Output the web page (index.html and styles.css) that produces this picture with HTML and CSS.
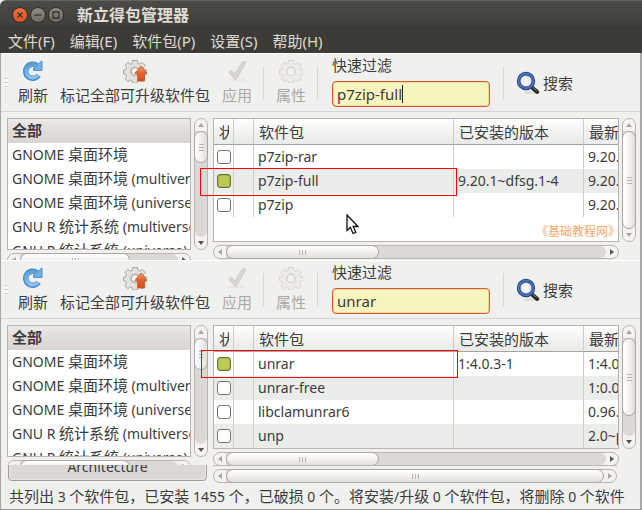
FILE: index.html
```html
<!DOCTYPE html>
<html lang="zh-CN">
<head>
<meta charset="utf-8">
<title>新立得包管理器</title>
<link rel="stylesheet" href="styles.css">
</head>
<body>
<svg class="defs" width="0" height="0" aria-hidden="true">
  <defs>
    <linearGradient id="blue" x1="0" y1="0" x2="0" y2="1"><stop offset="0" stop-color="#5c9fd4"/><stop offset="1" stop-color="#8cc0ee"/></linearGradient>
    <linearGradient id="orange" x1="0" y1="0" x2="0" y2="1"><stop offset="0" stop-color="#f3a36e"/><stop offset=".5" stop-color="#dd622d"/><stop offset="1" stop-color="#d5501c"/></linearGradient>
    <radialGradient id="glass"><stop offset="0" stop-color="#ffffff"/><stop offset="1" stop-color="#d5dbe3"/></radialGradient>
    <symbol id="refresh" viewBox="0 0 24 24">
      <path d="M17.5 16.2A7 7 0 1 1 15.8 6.6" fill="none" stroke="#4a8dc6" stroke-width="5.6"/>
      <path d="M12.6 11.4V8.9L14.8 7.6 17.6 4.8 21 2V11.4z" fill="#77b0e2" stroke="#4a8dc6"/>
      <path d="M17 15.7A6.4 6.4 0 1 1 16 7.4" fill="none" stroke="url(#blue)" stroke-width="3.8"/>
    </symbol>
    <symbol id="gear" viewBox="0 0 24 24">
      <path d="M9.6 1.5h4.8l.5 3 1.7.7 2.5-1.8 3 3-1.7 2.5.7 1.7 3 .5v3.8l-3 .6-.7 1.7 1.7 2.5-3 3-2.5-1.8-1.7.7-.5 2.4H9.6l-.5-2.4-1.7-.7-2.5 1.8-3-3 1.7-2.5-.7-1.7-2.4-.6v-3.8l2.4-.5.7-1.7-1.7-2.5 3-3 2.5 1.8 1.7-.7z" fill="#e4e2df" stroke="#aaa6a2"/>
      <circle cx="12" cy="12.4" r="5.6" fill="#d4d1ce"/><circle cx="12" cy="12.4" r="3.8" fill="#fafafa" stroke="#a29e9b"/>
    </symbol>
    <symbol id="gear-off" viewBox="0 0 24 24">
      <path d="M9.6 1.5h4.8l.5 3 1.7.7 2.5-1.8 3 3-1.7 2.5.7 1.7 3 .5v3.8l-3 .6-.7 1.7 1.7 2.5-3 3-2.5-1.8-1.7.7-.5 2.4H9.6l-.5-2.4-1.7-.7-2.5 1.8-3-3 1.7-2.5-.7-1.7-2.4-.6v-3.8l2.4-.5.7-1.7-1.7-2.5 3-3 2.5 1.8 1.7-.7z" fill="#eeecea" stroke="#d8d4d1"/>
      <circle cx="12" cy="12.4" r="4.2" fill="#f1f1ef" stroke="#d8d4d1" stroke-width="1.4"/>
    </symbol>
    <symbol id="upgrade" viewBox="0 0 24 24">
      <use href="#gear" width="24" height="24"/>
      <path d="M18 7l6.2 7.4h-2.6V22h-7v-7.6h-2.8z" fill="url(#orange)" stroke="#c9511f" stroke-width=".8"/>
    </symbol>
    <symbol id="apply" viewBox="0 0 24 24">
      <ellipse cx="12" cy="20.8" rx="10" ry="1.6" fill="#e9e8e6"/>
      <path d="M3.6 13l3.2-1.6 3 3.8L17.4 3l3.4-.4-1 3.2-9 15.2z" fill="#d8d5d2" stroke="#cfccc9"/>
    </symbol>
    <symbol id="search" viewBox="0 0 24 24">
      <ellipse cx="15" cy="21.5" rx="7" ry="1.6" fill="#dededc"/>
      <path d="M15 15.5l6.2 5.5" stroke="#292929" stroke-width="4" stroke-linecap="round"/>
      <path d="M16.5 16l4 3.4" stroke="#858585" stroke-width="1"/>
      <circle cx="10" cy="10" r="7.4" fill="url(#glass)" stroke="#23427e" stroke-width="3.6"/>
      <circle cx="10" cy="10" r="7.4" fill="none" stroke="#4c76bd" stroke-width="1.8"/>
    </symbol>
  </defs>
</svg>

<div class="window">
  <header class="titlebar">
    <button class="wm close" aria-label="关闭"><svg viewBox="0 0 16 16"><path d="M5.5 5.5l5 5M10.5 5.5l-5 5"/></svg></button>
    <button class="wm" aria-label="最小化"><svg viewBox="0 0 16 16"><path d="M4.5 8h7"/></svg></button>
    <button class="wm" aria-label="最大化"><svg viewBox="0 0 16 16"><path d="M5 5h6v6H5z"/></svg></button>
    <h1>新立得包管理器</h1>
  </header>
  <nav class="menubar">
    <button>文件(F)</button><button>编辑(E)</button><button>软件包(P)</button><button>设置(S)</button><button>帮助(H)</button>
  </nav>

  <section class="view first">
    <div class="toolbar">
      <span class="grip"></span>
      <button class="tool"><svg><use href="#refresh"/></svg>刷新</button>
      <button class="tool"><svg><use href="#upgrade"/></svg>标记全部可升级软件包</button>
      <button class="tool" disabled><svg><use href="#apply"/></svg>应用</button>
      <span class="sep"></span>
      <button class="tool" disabled><svg><use href="#gear-off"/></svg>属性</button>
      <span class="sep"></span>
      <div class="filter"><label for="filter1">快速过滤</label><span class="field"><input id="filter1" type="text" value="p7zip-full"><i class="caret"></i></span></div>
      <span class="sep"></span>
      <button class="find"><svg><use href="#search"/></svg>搜索</button>
    </div>
    <div class="panes">
      <div class="sidebar">
        <ul class="sections">
          <li class="current">全部</li>
          <li><span class="en">GNOME </span>桌面环境</li>
          <li><span class="en">GNOME </span>桌面环境<span class="en"> (multiverse)</span></li>
          <li><span class="en">GNOME </span>桌面环境<span class="en"> (universe)</span></li>
          <li><span class="en">GNU R </span>统计系统<span class="en"> (multiverse)</span></li>
          <li><span class="en">GNU R </span>统计系统<span class="en"> (universe)</span></li>
        </ul>
        <div class="vbar"><i class="arrow up dim"></i><div class="track"><div class="thumb short"></div></div><i class="arrow down"></i></div>
        <div class="hbar"><i class="arrow left dim"></i><div class="track"><div class="thumb side"></div></div><i class="arrow right"></i></div>
      </div>
      <div class="packages">
        <div class="frame">
          <table>
            <colgroup><col class="c-state"><col class="c-mark"><col class="c-name"><col class="c-ver"><col class="c-new"></colgroup>
            <thead><tr><th><div class="cut">状态</div></th><th></th><th>软件包</th><th>已安装的版本</th><th>最新版本</th></tr></thead>
            <tbody>
              <tr><td><input type="checkbox" aria-label="p7zip-rar"></td><td></td><td>p7zip-rar</td><td></td><td>9.20.1</td></tr>
              <tr><td><input type="checkbox" aria-label="p7zip-full" checked></td><td></td><td>p7zip-full</td><td>9.20.1~dfsg.1-4</td><td>9.20.1</td></tr>
              <tr><td><input type="checkbox" aria-label="p7zip"></td><td></td><td>p7zip</td><td></td><td>9.20.1</td></tr>
            </tbody>
          </table>
          <span class="credit">《基础教程网》</span>
        </div>
        <div class="vbar"><i class="arrow up dim"></i><div class="track"><div class="thumb full"></div></div><i class="arrow down dim"></i></div>
        <div class="hbar"><i class="arrow left dim"></i><div class="track"><div class="thumb main"></div></div><i class="arrow right"></i></div>
        <div class="outline second-row"></div>
        <svg class="pointer" viewBox="0 0 13 21"><path d="M1 1v15.5l3.4-3.2 2.6 6.2 2.8-1.2-2.6-5.8H12z" fill="#fff" stroke="#111" stroke-width="1.3"/></svg>
      </div>
    </div>
  </section>

  <section class="view second">
    <div class="toolbar">
      <span class="grip"></span>
      <button class="tool"><svg><use href="#refresh"/></svg>刷新</button>
      <button class="tool"><svg><use href="#upgrade"/></svg>标记全部可升级软件包</button>
      <button class="tool" disabled><svg><use href="#apply"/></svg>应用</button>
      <span class="sep"></span>
      <button class="tool" disabled><svg><use href="#gear-off"/></svg>属性</button>
      <span class="sep"></span>
      <div class="filter"><label for="filter2">快速过滤</label><span class="field"><input id="filter2" type="text" value="unrar"></span></div>
      <span class="sep"></span>
      <button class="find"><svg><use href="#search"/></svg>搜索</button>
    </div>
    <div class="panes">
      <div class="sidebar">
        <ul class="sections">
          <li class="current">全部</li>
          <li><span class="en">GNOME </span>桌面环境</li>
          <li><span class="en">GNOME </span>桌面环境<span class="en"> (multiverse)</span></li>
          <li><span class="en">GNOME </span>桌面环境<span class="en"> (universe)</span></li>
          <li><span class="en">GNU R </span>统计系统<span class="en"> (multiverse)</span></li>
          <li><span class="en">GNU R </span>统计系统<span class="en"> (universe)</span></li>
        </ul>
        <div class="vbar"><i class="arrow up dim"></i><div class="track"><div class="thumb short"></div></div><i class="arrow down"></i></div>
        <div class="hbar"><i class="arrow left dim"></i><div class="track"><div class="thumb side"></div></div><i class="arrow right"></i></div>
      </div>
      <div class="packages">
        <div class="frame">
          <table>
            <colgroup><col class="c-state"><col class="c-mark"><col class="c-name"><col class="c-ver"><col class="c-new"></colgroup>
            <thead><tr><th><div class="cut">状态</div></th><th></th><th>软件包</th><th>已安装的版本</th><th>最新版本</th></tr></thead>
            <tbody>
              <tr><td><input type="checkbox" aria-label="unrar" checked></td><td></td><td>unrar</td><td>1:4.0.3-1</td><td>1:4.0.3</td></tr>
              <tr><td><input type="checkbox" aria-label="unrar-free"></td><td></td><td>unrar-free</td><td></td><td>1:0.0.1</td></tr>
              <tr><td><input type="checkbox" aria-label="libclamunrar6"></td><td></td><td>libclamunrar6</td><td></td><td>0.96.4</td></tr>
              <tr><td><input type="checkbox" aria-label="unp"></td><td></td><td>unp</td><td></td><td>2.0~pre</td></tr>
            </tbody>
          </table>
        </div>
        <div class="vbar"><i class="arrow up dim"></i><div class="track"><div class="thumb most"></div></div><i class="arrow down"></i></div>
        <div class="hbar"><i class="arrow left dim"></i><div class="track"><div class="thumb main"></div></div><i class="arrow right"></i></div>
        <div class="outline first-row"></div>
      </div>
    </div>
  </section>

  <section class="tail">
    <button class="arch">Architecture</button>
    <div class="detail"><div class="hbar"><i class="arrow left dim"></i><div class="track"><div class="thumb full"></div></div><i class="arrow right dim"></i></div></div>
  </section>
  <footer class="status">共列出<span class="en"> 3 </span>个软件包，已安装<span class="en"> 1455 </span>个，已破损<span class="en"> 0 </span>个。将安装<span class="en">/</span>升级<span class="en"> 0 </span>个软件包，将删除<span class="en"> 0 </span>个软件</footer>
</div>
</body>
</html>
```

FILE: styles.css
```css
* { box-sizing: border-box; }

body {
  margin: 0;
  background: #3c3b37;
  color: #3c3c3c;
  font: 15px/24px "Noto Sans", "Noto Sans CJK SC", sans-serif;
  overflow: hidden;
}

button {
  margin: 0;
  padding: 0;
  border: 0;
  background: none;
  color: inherit;
  font: inherit;
}

.defs { position: absolute; }
.en { font-size: 14px; white-space: pre; }

.window {
  display: flex;
  flex-direction: column;
  min-height: 100vh;
  border-bottom: 1px solid #9c9894;
  background: #f0f1ef;
}

/* Title and menus */
.titlebar {
  display: flex;
  align-items: center;
  gap: 2px;
  height: 26px;
  padding: 2px 12px 0;
  border-top: 1px solid #67655f;
  border-radius: 6px 0 0 0;
  background: linear-gradient(#4b4a45, #403f3a);
}
.titlebar h1 {
  margin: 0 0 0 11px;
  color: #dfdbd2;
  font-size: 16px;
  line-height: 20px;
}
.wm {
  width: 16px;
  height: 16px;
  border: 1px solid #2f2e2a;
  border-radius: 50%;
  background: linear-gradient(#8d8b83, #6c6a63);
}
.wm svg { display: block; margin: -1px; width: 16px; height: 16px; fill: none; stroke: #34332f; stroke-width: 1.3; }
.wm.close { background: linear-gradient(#f2703e, #d9501d); }
.menubar {
  display: flex;
  gap: 15px;
  height: 27px;
  padding: 2px 8px 0;
  background: #3c3b37;
  color: #dfdbd2;
}
.menubar button { line-height: 24px; }

/* Toolbar */
.view {
  overflow: hidden;
  border-left: 1px solid #a9a4a0;
  border-right: 2px solid #aaa7a4;
}
.view.first { height: 207px; }
.view.second { height: 205px; }
.toolbar {
  display: flex;
  align-items: center;
  height: 59px;
  border-top: 1px solid #fff;
  border-bottom: 1px solid #d6d5d3;
}
.grip {
  width: 4px;
  height: 9px;
  margin: 0 4px 0 3px;
  background: repeating-linear-gradient(#d2cfcc 0 1px, #fafafa 1px 4px);
}
.tool {
  display: flex;
  flex-direction: column;
  align-items: center;
  padding: 0 6px;
  line-height: 24px;
  white-space: nowrap;
}
.tool svg { width: 24px; height: 24px; }
.tool:disabled { color: #aaa8a5; }
.sep { width: 1px; height: 33px; margin: 0 6px 0 5px; background: #dbd6d4; }
.filter { display: flex; flex-direction: column; align-self: flex-start; width: 174px; padding: 0 8px; }
.filter label { line-height: 22px; height: 27px; }
.field { position: relative; display: block; }
.field input {
  display: block;
  width: 100%;
  height: 26px;
  padding: 0 4px;
  border: 1px solid #d4592c;
  border-radius: 4px;
  outline: 0;
  box-shadow: inset 0 0 0 1px #f3d9a0;
  background: #f6f5bd;
  color: #3c3c3c;
  font: inherit;
}
.caret { position: absolute; left: 70px; top: 4px; width: 1px; height: 18px; background: #222; }
.find { display: flex; align-items: center; gap: 3px; padding-left: 6px; white-space: nowrap; }
.find svg { width: 24px; height: 24px; }

/* Panes */
.panes { display: flex; gap: 5px; padding: 6px 4px 0 6px; }
.sidebar, .packages { display: grid; gap: 3px; }
.sidebar { grid-template: 132px 14px / 184px 14px; }
.packages { position: relative; flex: 1; min-width: 0; grid-template: 124px 14px / minmax(0, 1fr) 14px; }
.sections {
  margin: 0;
  padding: 0;
  border: 1px solid #b9b3b0;
  background: #fff;
  list-style: none;
  overflow: hidden;
}
.sections li { height: 24px; padding-left: 4px; line-height: 22px; white-space: nowrap; }
.sections .current { background: linear-gradient(#ecebe9, #e3e0de 30%, #d9d5d3); font-weight: bold; }

.frame { position: relative; overflow: hidden; border: 1px solid #b9b3b0; background: #fff; }
table { width: 100%; min-width: 470px; table-layout: fixed; border-collapse: separate; border-spacing: 0; }
.c-state, .c-mark { width: 20px; }
.c-name { width: 200px; }
.c-ver { width: 130px; }
th, td {
  height: 24px;
  padding: 0 4px;
  border-right: 1px solid #cfccca;
  text-align: left;
  white-space: nowrap;
}
th {
  height: 26px;
  padding: 0 5px;
  border-bottom: 1px solid #a9a29f;
  background: linear-gradient(#fff, #f3f4f2 45%, #e9ebe8);
  font-weight: normal;
}
.cut { width: 10px; overflow: hidden; }
td { font-size: 14px; }
tr:nth-child(even) td { background: #ebedea; }
td:first-child { padding: 0 3px; }
input[type="checkbox"] {
  display: block;
  width: 14px;
  height: 14px;
  margin: 0;
  appearance: none;
  border: 1px solid #737373;
  border-radius: 3px;
  background: #fff;
}
input[type="checkbox"]:checked { border-color: #6c7044; background: #bccb54; box-shadow: inset 0 0 0 1px #a5b443; }
.credit { position: absolute; right: -2px; bottom: 0; color: #f5a76c; font-size: 12px; line-height: 18px; white-space: nowrap; }

/* Scrollbars */
.vbar, .hbar { display: flex; border: 1px solid #bbb4b1; border-radius: 7px; background: #f6f2f1; }
.vbar { flex-direction: column; width: 14px; }
.hbar { height: 14px; }
.track { display: flex; flex: 1; background: #dcd8d6; }
.hbar .track { border-radius: 0 6px 6px 0; }
.vbar .track { flex-direction: column; border-radius: 0 0 6px 6px; }
.arrow { position: relative; flex: none; width: 12px; height: 12px; }
.arrow::after { content: ""; position: absolute; inset: 3px 4px; background: #555; }
.arrow.dim::after { background: #aaa5a2; }
.up::after, .down::after { inset: 4px 3px; }
.up::after { clip-path: polygon(0 100%, 50% 0, 100% 100%); }
.down::after { clip-path: polygon(0 0, 50% 100%, 100% 0); }
.left::after { clip-path: polygon(100% 0, 0 50%, 100% 100%); }
.right::after { clip-path: polygon(0 0, 100% 50%, 0 100%); }
.thumb { position: relative; border: 1px solid #aca5a2; border-radius: 7px; }
.vbar .thumb { margin: 0 -1px; background: linear-gradient(90deg, #fff, #f0eeed 60%, #e0dddb); }
.hbar .thumb { margin: -1px 0; background: linear-gradient(#fff, #f0eeed 60%, #e0dddb); }
.thumb::after { content: ""; position: absolute; inset: 0; margin: auto; }
.vbar .thumb::after { width: 5px; height: 7px; background: repeating-linear-gradient(#b8b3b0 0 1px, transparent 1px 3px); }
.hbar .thumb::after { width: 7px; height: 5px; background: repeating-linear-gradient(90deg, #b8b3b0 0 1px, transparent 1px 3px); }
.thumb.short { height: 32px; }
.thumb.most { height: 78px; }
.thumb.side { width: 110px; }
.thumb.main { width: 153px; }
.thumb.full { flex: 1; }

/* Overlays */
.outline { position: absolute; width: 257px; height: 28px; border: 1px solid #f00; }
.second-row { left: -13px; top: 50px; }
.first-row { left: -12px; top: 25px; }
.pointer { position: absolute; left: 133px; top: 96px; width: 13px; height: 21px; }

/* Lower strip */
.tail {
  display: flex;
  gap: 6px;
  height: 18px;
  padding: 0 23px 0 7px;
  border-left: 1px solid #a9a4a0;
  border-right: 2px solid #aaa7a4;
  overflow: hidden;
}
.arch {
  flex: none;
  width: 199px;
  height: 28px;
  margin-top: -12px;
  border: 1px solid #a39d99;
  border-radius: 4px;
  box-shadow: inset 0 0 0 1px #eae7e5;
  background: #dcd8d6;
  font-size: 14px;
}
.detail { flex: 1; padding-top: 3px; border-top: 1px solid #bbb7b4; }
.status {
  flex: 1;
  padding: 1px 8px 0;
  border-left: 1px solid #a9a4a0;
  border-right: 2px solid #aaa7a4;
  white-space: nowrap;
  overflow: hidden;
}
```
